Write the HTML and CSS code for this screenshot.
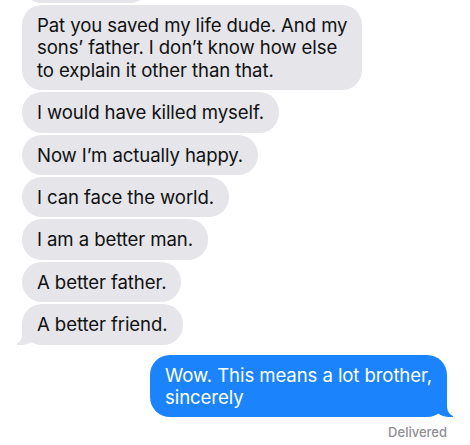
FILE: index.html
```html
<!DOCTYPE html>
<html>
<head>
<meta charset="utf-8">
<link rel="stylesheet" href="styles.css">
</head>
<body>
<div class="screen">
<div class="thread">
  <div class="bubble in top-partial"></div>
  <div class="bubble in">Pat you saved my life dude. And my<br>sons’ father. I don’t know how else<br>to explain it other than that.</div>
  <div class="bubble in">I would have killed myself.</div>
  <div class="bubble in">Now I’m actually happy.</div>
  <div class="bubble in">I can face the world.</div>
  <div class="bubble in">I am a better man.</div>
  <div class="bubble in">A better father.</div>
  <div class="bubble in tail">A better friend.</div>
  <div class="bubble out tail">Wow. This means a lot brother,<br>sincerely</div>
  <div class="status">Delivered</div>
  <div class="bubble in bottom-partial"></div>
</div>
</div>
</body>
</html>
```
FILE: styles.css
```css
html, body {
  margin: 0;
  padding: 0;
  background: #ffffff;
}
.screen {
  width: 470px;
  height: 445px;
  overflow: hidden;
}
.thread {
  display: flex;
  flex-direction: column;
  align-items: flex-start;
  gap: 2px;
  padding: 0 23px 0 22px;
  font-family: Inter, "Liberation Sans", sans-serif;
  font-size: 18.6px;
  line-height: 22.4px;
  letter-spacing: -0.1px;
}
.bubble {
  position: relative;
  padding: 9px 15px;
  border-radius: 20px;
  color: #111;
}
.in {
  background: #e5e5ea;
}
.top-partial {
  margin-top: -37px;
  width: 98px;
  height: 22px;
}
.bottom-partial {
  margin-top: 6px;
  width: 38px;
  height: 22px;
}
.out {
  align-self: flex-end;
  background: #1b84fd;
  color: #fff;
  margin-top: 8px;
}
.tail::before,
.tail::after {
  content: "";
  position: absolute;
  bottom: 0;
  height: 20px;
}
.in.tail::before {
  left: -5px;
  width: 20px;
  background: #e5e5ea;
  border-bottom-right-radius: 15px;
}
.in.tail::after {
  left: -10px;
  width: 10px;
  background: #fff;
  border-bottom-right-radius: 10px;
}
.out.tail::before {
  right: -6px;
  width: 20px;
  background: #1b84fd;
  border-bottom-left-radius: 15px;
}
.out.tail::after {
  right: -10px;
  width: 10px;
  background: #fff;
  border-bottom-left-radius: 10px;
}
.status {
  align-self: flex-end;
  margin-top: 5px;
  font-size: 13px;
  line-height: 16px;
  font-weight: 500;
  color: #8e8e93;
  letter-spacing: 0;
}
```
